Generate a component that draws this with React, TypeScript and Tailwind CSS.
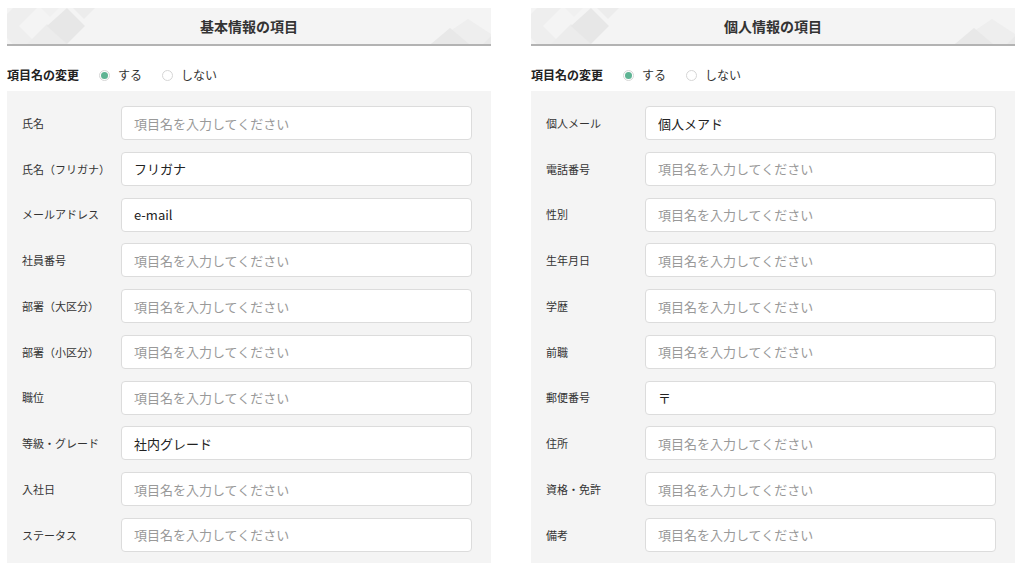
import React from "react"

const font = { fontFamily: '"Noto Sans CJK JP", "Noto Sans", sans-serif' }

type Field = { label: string; value?: string }

const basicFields: Field[] = [
  { label: "氏名" },
  { label: "氏名（フリガナ）", value: "フリガナ" },
  { label: "メールアドレス", value: "e-mail" },
  { label: "社員番号" },
  { label: "部署（大区分）" },
  { label: "部署（小区分）" },
  { label: "職位" },
  { label: "等級・グレード", value: "社内グレード" },
  { label: "入社日" },
  { label: "ステータス" },
]

const personalFields: Field[] = [
  { label: "個人メール", value: "個人メアド" },
  { label: "電話番号" },
  { label: "性別" },
  { label: "生年月日" },
  { label: "学歴" },
  { label: "前職" },
  { label: "郵便番号", value: "〒" },
  { label: "住所" },
  { label: "資格・免許" },
  { label: "備考" },
]

function HeaderPattern() {
  return (
    <svg className="absolute inset-0 h-full w-full" viewBox="0 0 484 36" preserveAspectRatio="none">
      {/* left corner diamonds */}
      <polygon points="0,6 6,0 30,0 12,18 30,36 6,36 0,30" fill="#eeeeee" />
      <polygon points="20,36 40,16 60,36" fill="#ececec" />
      <polygon points="40,18 60,0 78,18 60,36" fill="#e7e7e7" />
      <polygon points="66,0 88,0 77,11" fill="#ececec" />
      <polygon points="34,0 52,0 43,9" fill="#f0f0f0" />
      {/* right corner peaks */}
      <polygon points="424,36 461,11 484,26 484,36" fill="#eeeeee" />
      <polygon points="424,36 443,20 462,36" fill="#e8e8e8" />
      <polygon points="476,36 484,28 484,36" fill="#e9e9e9" />
    </svg>
  )
}

function Radio({ checked, label }: { checked?: boolean; label: string }) {
  return (
    <label className="flex items-center gap-[8px]">
      <span className="flex h-[11px] w-[11px] items-center justify-center rounded-full border border-[#d6d6d6] bg-white">
        {checked && <span className="h-[7px] w-[7px] rounded-full bg-[#5eb393]" />}
      </span>
      <span className="text-[12px] text-[#333]">{label}</span>
    </label>
  )
}

function Panel({ title, fields }: { title: string; fields: Field[] }) {
  return (
    <section className="w-[484px]">
      <div className="relative flex h-[38px] items-center justify-center border-b-2 border-[#b3b3b3] bg-[#f4f4f4]">
        <HeaderPattern />
        <h2 className="relative text-[14px] font-bold text-[#333]">{title}</h2>
      </div>

      <div className="mt-[21px] mb-[8px] flex h-[16px] items-center">
        <span className="w-[92px] text-[12px] font-bold text-[#222]">項目名の変更</span>
        <div className="flex items-center gap-[20px]">
          <Radio checked label="する" />
          <Radio label="しない" />
        </div>
      </div>

      <div className="flex flex-col gap-[11.75px] bg-[#f4f4f4] pt-[15px] pb-[11px] pr-[19px] pl-[15px]">
        {fields.map((f) => (
          <div key={f.label} className="flex items-center">
            <span className="w-[99px] text-[11px] text-[#333]">{f.label}</span>
            <input
              className="h-[34px] flex-1 rounded-[4px] border border-[#dcdcdc] bg-white px-[12px] text-[13px] text-[#222] outline-none placeholder:text-[#999]"
              style={font}
              placeholder="項目名を入力してください"
              defaultValue={f.value}
            />
          </div>
        ))}
      </div>
    </section>
  )
}

export default function App() {
  return (
    <div className="flex h-[568px] w-[1024px] gap-[40px] bg-white pt-[8px] pl-[7px]" style={font}>
      <Panel title="基本情報の項目" fields={basicFields} />
      <Panel title="個人情報の項目" fields={personalFields} />
    </div>
  )
}
